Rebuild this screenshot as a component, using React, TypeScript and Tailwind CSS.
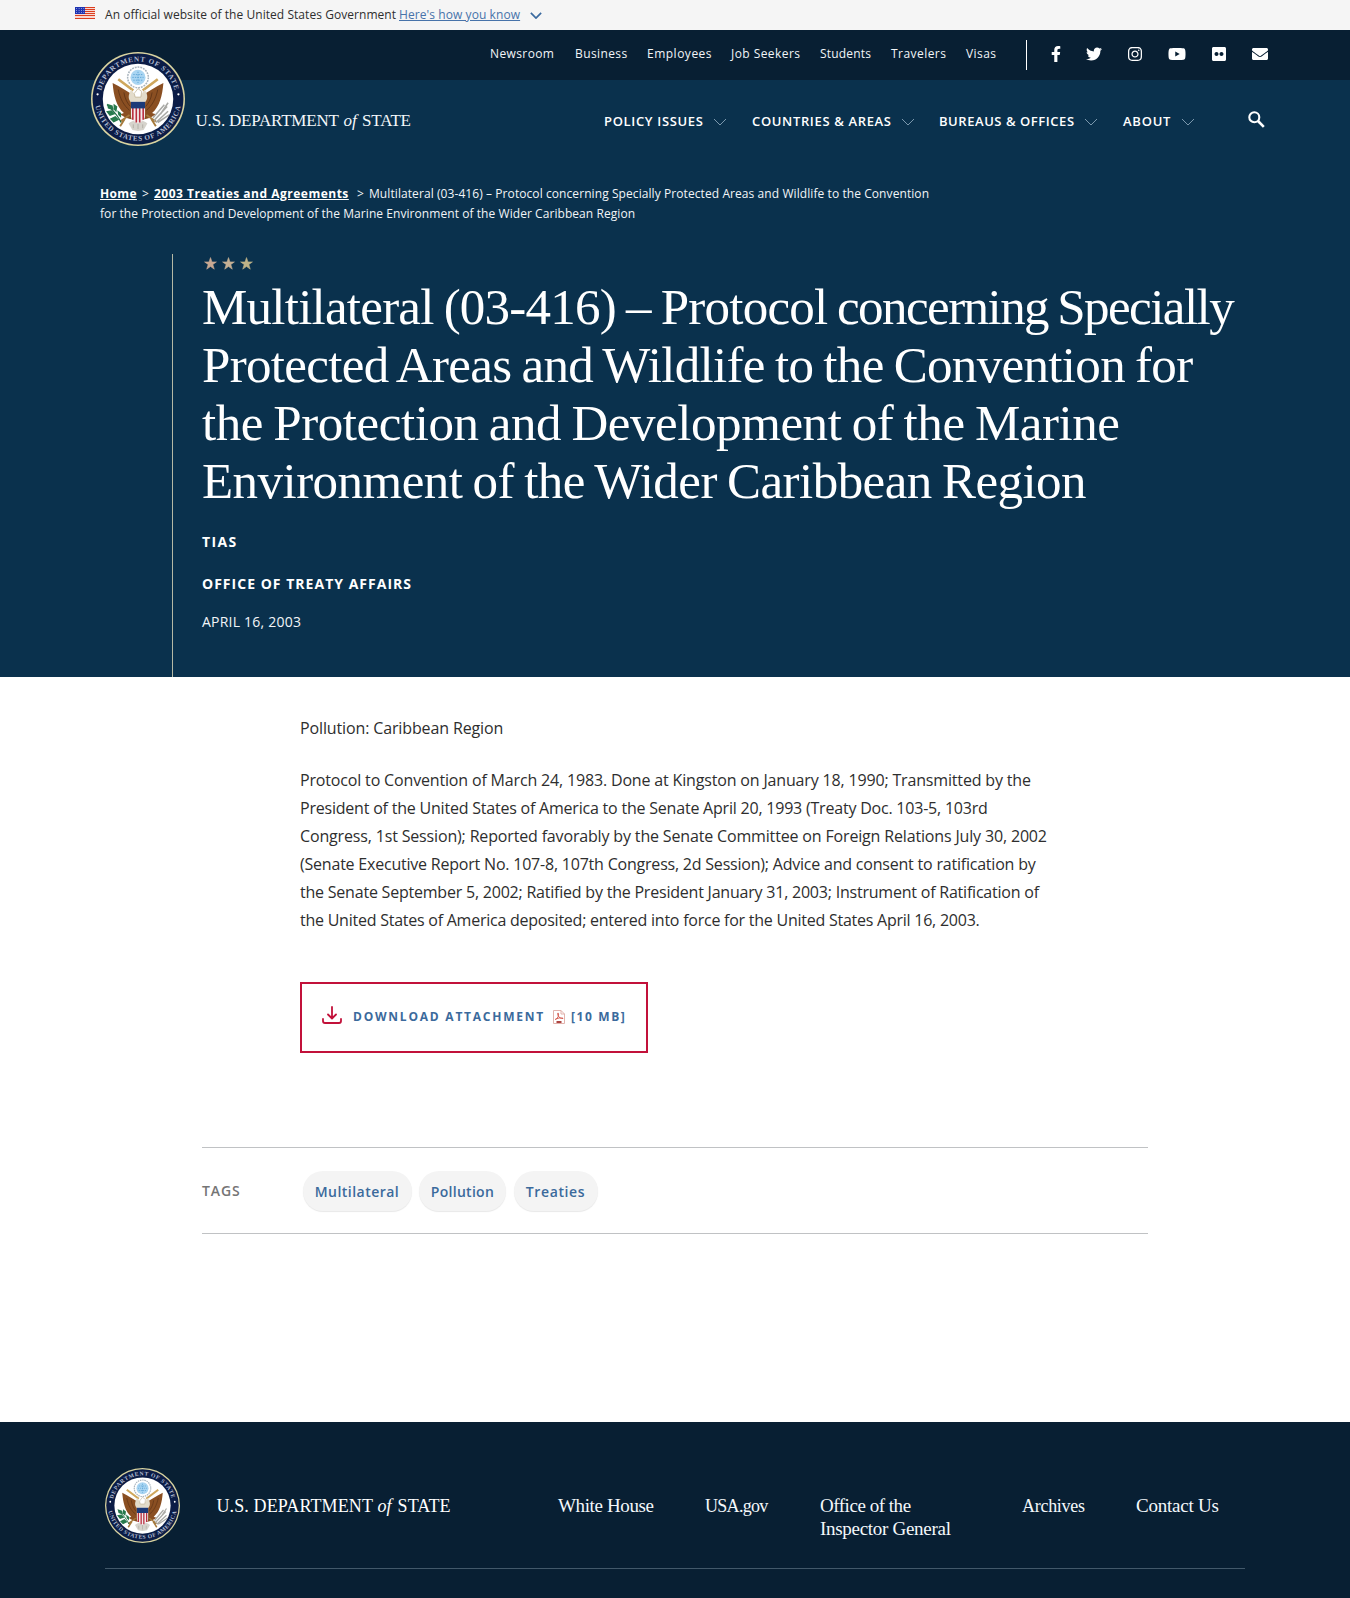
import {
  FaFacebookF,
  FaTwitter,
  FaInstagram,
  FaYoutube,
  FaFlickr,
  FaEnvelope,
} from "react-icons/fa";

function Chevron({ className }: { className: string }) {
  return (
    <svg viewBox="0 0 14 8" className={className} fill="none" stroke="currentColor">
      <path d="M1 1l6 6 6-6" />
    </svg>
  );
}

function Flag() {
  return (
    <svg viewBox="0 0 20 12" className="h-3 w-5 shrink-0">
      <rect width="20" height="12" fill="#fff" />
      {[0, 2, 4, 6, 8, 10.8].map((y) => (
        <rect key={y} y={y} width="20" height="1.2" fill="#db3e1f" />
      ))}
      <rect width="10" height="7" fill="#1e33b1" />
      {[1.2, 3.2, 5.2].map((y) =>
        [1.2, 3.7, 6.2, 8.4].map((x) => (
          <rect key={`${x}-${y}`} x={x} y={y} width="0.8" height="0.8" fill="#c5cdf0" />
        ))
      )}
    </svg>
  );
}

function Seal({ id, className }: { id: string; className: string }) {
  return (
    <svg viewBox="0 0 100 100" className={className}>
      <defs>
        <path id={`${id}-top`} d="M10 50a40 40 0 0 1 80 0" />
        <path id={`${id}-bottom`} d="M5.2 48a44.8 44.8 0 0 0 89.6 0" />
      </defs>
      <circle cx="50" cy="50" r="50" fill="#d9d3a0" />
      <circle cx="50" cy="50" r="48.3" fill="#0b1c46" />
      <circle cx="50" cy="50" r="37.5" fill="#fff" />
      <g fill="#b3bdd2" fontFamily="Liberation Serif, serif" fontSize="7.6" fontWeight="700" textAnchor="middle">
        <text letterSpacing="0.9">
          <textPath href={`#${id}-top`} startOffset="50%">DEPARTMENT OF STATE</textPath>
        </text>
        <text letterSpacing="0.5" dy="1.6">
          <textPath href={`#${id}-bottom`} startOffset="50%">UNITED STATES OF AMERICA</textPath>
        </text>
      </g>
      <circle cx="7" cy="45" r="1.2" fill="#fff" />
      <circle cx="93" cy="45" r="1.2" fill="#fff" />
      {/* glory of stars */}
      <circle cx="50" cy="27" r="11" fill="#fff" stroke="#a9b4bd" strokeWidth="1.6" strokeDasharray="2 1" />
      <circle cx="50" cy="27" r="8" fill="#a9d5f2" />
      <path d="M45 24h10M44 27h12M45 30h10M50 21v12" stroke="#5fa6d8" strokeWidth="1" strokeDasharray="1.5 1.2" />
      {/* wings */}
      <path d="M47 47C40 43 31 37 23 33c1 13 4 25 12 32-2 1-3 1-4 1 4 4 10 5 14 6z" fill="#8a4f22" />
      <path d="M53 47c7-4 16-10 24-14-1 13-4 25-12 32 2 1 3 1 4 1-4 4-10 5-14 6z" fill="#8a4f22" />
      <path d="M29 29l16 12M71 29L55 41" stroke="#cfa75c" strokeWidth="2.8" />
      <path d="M29 40c2 10 6 17 12 22M71 40c-2 10-6 17-12 22M35 43c1 7 4 12 7 15M65 43c-1 7-4 12-7 15" stroke="#5e3315" fill="none" strokeWidth="0.9" />
      {/* head and tail */}
      <path d="M43 40c-4 6-4 11 1 15h12c5-4 5-9 1-15-2 3-3 5-4 6l-3-3-3 3c-1-1-2-3-4-6z" fill="#e3dccb" />
      <path d="M46 44l4-5 4 3-1 6h-6z" fill="#fff" stroke="#b9a988" strokeWidth="0.7" />
      <path d="M40 76c5-5 15-5 20 0l-4 7-6 1-6-1z" fill="#d6d3cc" />
      <path d="M45 77v4M50 76v6M55 77v4" stroke="#aaa69d" strokeWidth="0.8" />
      <path d="M41 67l-10 7M59 67l10 7M31 79l5-8M69 79l-5-8" stroke="#a67a3c" strokeWidth="2" />
      {/* shield */}
      <path d="M42.500 53h15v15c0 4-3 6-7.500 8-4.500-2-7.500-4-7.500-8z" fill="#f3eded" />
      <path d="M44.500 59v13M48.200 59v16M51.800 59v16M55.500 59v13" stroke="#b92d3e" strokeWidth="1.700" />
      <path d="M42.500 53h15v7h-15z" fill="#1c3a78" />
      {/* olive branch */}
      <path d="M17 56c5 5 11 10 15 19" stroke="#1f6a45" strokeWidth="1.200" fill="none" />
      <path d="M17 55l6 2 1 5-6-2zM16 63l6-1 4 4-6 2zM20 71l6-3 4 4-6 3zM24 55l4 3-1 6-3-3zM28 62l4 3v5l-3-3z" fill="#277a4d" />
      {/* arrows */}
      <path d="M67 73l14-15M69 75l13-12M66 70l12-14M71 75l12-8M74 66l8-12" stroke="#a9a9a5" strokeWidth="1.600" />
    </svg>
  );
}

const topLinks = [
  { label: "Newsroom", className: "w-[85px] tracking-[0.39px]" },
  { label: "Business", className: "w-[72px] tracking-[0.4px]" },
  { label: "Employees", className: "w-[84px] tracking-[0.5px]" },
  { label: "Job Seekers", className: "w-[89px] tracking-[0.44px]" },
  { label: "Students", className: "w-[71px] tracking-[0.2px]" },
  { label: "Travelers", className: "w-[75px] tracking-[0.45px]" },
  { label: "Visas", className: "w-[60px] tracking-[0.45px]" },
];

const mainLinks = [
  { label: "POLICY ISSUES", item: "w-[148px]", text: "w-[108.500px] tracking-[0.67px]" },
  { label: "COUNTRIES & AREAS", item: "w-[187px]", text: "w-[148.500px] tracking-[0.65px]" },
  { label: "BUREAUS & OFFICES", item: "w-[184px]", text: "w-[144.500px] tracking-[0.55px]" },
  { label: "ABOUT", item: "w-[125px]", text: "w-[57.500px] tracking-[0.75px]" },
];

const bodyLines = [
  { text: "Protocol to Convention of March 24, 1983. Done at Kingston on January 18, 1990; Transmitted by the", className: "tracking-[-0.165px]" },
  { text: "President of the United States of America to the Senate April 20, 1993 (Treaty Doc. 103-5, 103rd", className: "tracking-[-0.21px]" },
  { text: "Congress, 1st Session); Reported favorably by the Senate Committee on Foreign Relations July 30, 2002", className: "tracking-[-0.16px]" },
  { text: "(Senate Executive Report No. 107-8, 107th Congress, 2d Session); Advice and consent to ratification by", className: "tracking-[-0.21px]" },
  { text: "the Senate September 5, 2002; Ratified by the President January 31, 2003; Instrument of Ratification of", className: "tracking-[-0.215px]" },
  { text: "the United States of America deposited; entered into force for the United States April 16, 2003.", className: "tracking-[-0.242px]" },
];

const tags = [
  { label: "Multilateral", className: "w-[109px] tracking-[0.47px]" },
  { label: "Pollution", className: "w-[87px] tracking-[0.28px]" },
  { label: "Treaties", className: "w-[84px] tracking-[0.6px]" },
];

export default function App() {
  return (
    <div className="flex h-[1598px] w-[1350px] flex-col overflow-hidden whitespace-nowrap bg-white font-['Open_Sans',sans-serif]">
      <div className="flex h-[30px] items-center bg-[#f5f5f5] pl-[75px] text-xs text-[#2e2e2e]">
        <div className="pb-[4px]"><Flag /></div>
        <span className="ml-[10px] w-[294px] tracking-[0.05px]">An official website of the United States Government</span>
        <a className="text-[#4773aa] tracking-[0.08px] underline">Here's how you know</a>
        <Chevron className="ml-2.5 mt-px h-[7px] w-3 stroke-[2] text-[#3a6a9f]" />
      </div>

      <header className="relative">
        <div className="flex h-[50px] items-center bg-[#081f33] pl-[490px] text-xs text-[#f2f5f8]">
          <nav className="flex pb-[3px]">
            {topLinks.map((l) => (
              <a key={l.label} className={l.className}>{l.label}</a>
            ))}
          </nav>
          <div className="h-[30px] w-px bg-white" />
          <div className="flex items-center pl-5 pb-[3px] text-base text-white">
            <span className="flex w-[17px] justify-center"><FaFacebookF /></span>
            <FaTwitter className="ml-[22px]" />
            <FaInstagram className="ml-[25px]" />
            <FaYoutube className="ml-[25px] text-[18px]" />
            <FaFlickr className="ml-[25px]" />
            <FaEnvelope className="ml-[25px]" />
          </div>
        </div>
        <div className="flex h-20 bg-[#0a314d] pl-[195.500px] text-white">
          <div className="mt-[29px] flex h-6 w-[408.500px] items-center font-['Liberation_Serif',serif] text-[17px] text-[#f4f8fb]">
            <span className="w-[148px] tracking-[-0.2px]">U.S. DEPARTMENT</span>
            <span className="w-[18.500px] italic">of</span>
            <span className="tracking-[-0.16px]">STATE</span>
          </div>
          <nav className="mt-[31px] flex h-5 text-[13px] font-semibold leading-5">
            {mainLinks.map((l) => (
              <div key={l.label} className={`flex items-center ${l.item}`}>
                <a className={l.text}>{l.label}</a>
                <Chevron className="mt-0.5 h-[8px] w-3.5 text-[#7b98ad]" />
              </div>
            ))}
          </nav>
          <svg viewBox="0 0 17 17" className="mt-[31px] h-[17px] w-[17px]" fill="none" stroke="currentColor">
            <circle cx="6.300" cy="6.300" r="5" strokeWidth="2.100" />
            <path d="M10 10l5.800 5.800" strokeWidth="2.600" />
          </svg>
        </div>
        <div className="absolute left-[91px] top-[22px]">
          <Seal id="header-seal" className="h-[94px] w-[94px]" />
        </div>
      </header>

      <section className="h-[517px] bg-[#0a314d] text-white">
        <div className="ml-[100px] h-[94px] pt-[24px] text-xs leading-5 text-[#f2f5f8]">
          <div className="flex">
            <a className="w-[42px] font-bold tracking-[0.34px] text-white"><span className="underline">Home</span></a>
            <span className="w-3">&gt;</span>
            <a className="w-[203px] font-bold tracking-[0.5px] text-white"><span className="underline">2003 Treaties and Agreements</span></a>
            <span className="w-3">&gt;</span>
            <span className="tracking-[0.079px]">Multilateral (03-416) – Protocol concerning Specially Protected Areas and Wildlife to the Convention</span>
          </div>
          <p className="tracking-[0.063px]">for the Protection and Development of the Marine Environment of the Wider Caribbean Region</p>
        </div>
        <div className="ml-[172px] h-[423px] border-l border-[#b5b9a5] pl-[29px]">
          <div className="flex h-6 items-start gap-[5px] pl-[2px] pt-[3px]">
            {["#c9a993", "#c5b095", "#beb388"].map((c) => (
              <svg key={c} viewBox="0 0 24 24" className="h-[13px] w-[13px]" fill={c} stroke={c}>
                <path d="M12 1l2.800 8h8.200l-6.600 5 2.600 8.500L12 17.500 5 22.500 7.600 14 1 9h8.200z" />
              </svg>
            ))}
          </div>
          <h1 className="font-['Liberation_Serif',serif] text-[51px] leading-[58px] [word-spacing:-2px]">
            <span className="block">
              <span className="inline-block w-[635px] tracking-[-0.76px]">Multilateral (03-416) – Protocol </span>
              <span className="tracking-[-1.55px]">concerning Specially</span>
            </span>
            <span className="block tracking-[-0.67px]">Protected Areas and Wildlife to the Convention for</span>
            <span className="block tracking-[-0.44px]">the Protection and Development of the Marine</span>
            <span className="block tracking-[-0.54px]">Environment of the Wider Caribbean Region</span>
          </h1>
          <p className="mt-[22px] text-sm font-bold tracking-[1.4px]">TIAS</p>
          <p className="mt-[22px] text-sm font-bold tracking-[1.02px]">OFFICE OF TREATY AFFAIRS</p>
          <p className="mt-[18px] text-sm tracking-[0.22px] text-[#f2f5f8]">APRIL 16, 2003</p>
        </div>
      </section>

      <main className="h-[745px]">
        <div className="ml-[300px] pt-[37px] text-base leading-7 text-[#2e2e2e]">
          <p className="tracking-[-0.13px]">Pollution: Caribbean Region</p>
          <p className="mt-6">
            {bodyLines.map((l) => (
              <span key={l.text} className={`block ${l.className}`}>{l.text}</span>
            ))}
          </p>
        </div>
        <div className="ml-[300px] mt-[48px] flex h-[71px] w-[348px] items-center border-2 border-[#c2113a] pl-5 text-xs font-bold text-[#3b6a9c]">
          <svg viewBox="0 0 20 18" className="mb-[5px] h-[18px] w-5" fill="none" stroke="#c2113a" strokeWidth="1.800" strokeLinecap="round" strokeLinejoin="round">
            <path d="M10 1v11M6 8.500l4 4 4-4M1 13v2q0 2 2 2h14q2 0 2-2v-2" />
          </svg>
          <span className="ml-[11px] w-[200px] pb-0.5 tracking-[1.77px]">DOWNLOAD ATTACHMENT</span>
          <svg viewBox="0 0 12 14" className="mb-0.5 h-3.5 w-3" fill="none" stroke="#dd8074" strokeWidth="0.900">
            <path d="M.5.5h7.500l3.500 3.500v9.500H.5zM8 .5v3.500h3.500" stroke="#dfaaa4" />
            <path d="M2 9.500c3-1 4-4 3.500-6-.5-1.500-1.500 0-.5 2S8 9 10 8.500c1-.5-4-1.500-7.500 1" stroke="#d4574b" />
            <path d="M3.500 12h5" stroke="#a3302c" strokeWidth="1.800" />
          </svg>
          <span className="ml-1.5 pb-0.5 tracking-[1.6px]">[10 MB]</span>
        </div>
        <div className="ml-[202px] mt-[94px] flex h-[87px] w-[946px] border-y border-[#c0c2c4] text-sm font-semibold">
          <span className="mt-[33px] w-[100.500px] text-[#757575] tracking-[0.9px]">TAGS</span>
          <div className="mt-[23px] flex gap-[7.500px]">
            {tags.map((t) => (
              <a key={t.label} className={`flex h-10 items-center justify-center rounded-full bg-[#f4f4f4] pt-px text-[#3b6a9c] shadow-[0_1px_1px_#e8e8e8] ${t.className}`}>
                {t.label}
              </a>
            ))}
          </div>
        </div>
      </main>

      <footer className="h-44 bg-[#081f33] pl-[105px] text-white">
        <div className="flex h-[147px] w-[1140px] border-b border-[#42586a] pt-[46px] font-['Liberation_Serif',serif]">
          <Seal id="footer-seal" className="h-[75px] w-[75px]" />
          <div className="ml-[36.500px] flex w-[341.500px] pt-[26px] text-lg leading-6">
            <span className="w-[161px] tracking-[0.12px]">U.S. DEPARTMENT</span>
            <span className="w-5 italic">of</span>
            <span className="tracking-[0.13px]">STATE</span>
          </div>
          <nav className="flex pt-[26px] text-[19px] leading-[23px] text-[#f4f8fb]">
            <a className="w-[147px] tracking-[-0.37px]">White House</a>
            <a className="w-[115px] text-lg leading-[25px] tracking-[-0.7px]">USA.gov</a>
            <a className="w-[202px]">
              <span className="block tracking-[-0.47px]">Office of the</span>
              <span className="block tracking-[-0.29px]">Inspector General</span>
            </a>
            <a className="w-[114px] text-lg leading-[25px] tracking-[-0.28px]">Archives</a>
            <a className="tracking-[-0.22px]">Contact Us</a>
          </nav>
        </div>
      </footer>
    </div>
  );
}
